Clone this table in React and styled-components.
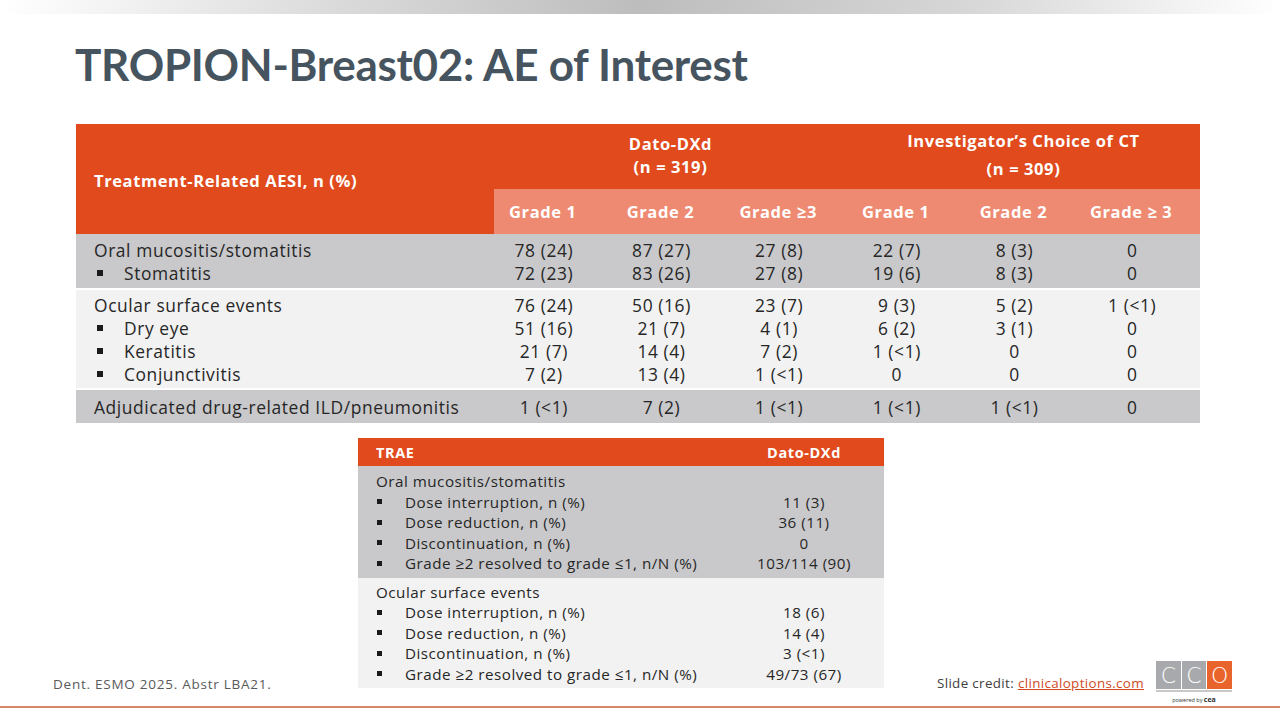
import React from 'react';
import styled, { createGlobalStyle } from 'styled-components';

const GlobalStyle = createGlobalStyle`
  html, body {
    margin: 0;
    padding: 0;
    background: #ffffff;
  }
  body {
    font-family: "Open Sans", Lato, sans-serif;
  }
`;

const Slide = styled.div`
  width: 1280px;
  height: 720px;
  display: flex;
  flex-direction: column;
  overflow: hidden;
  background: #fff;
`;

const TopBar = styled.div`
  height: 14px;
  background: linear-gradient(90deg, #ffffff 0%, #dcdcdc 25%, #bdbdbd 50%, #d6d6d6 75%, #ffffff 100%);
`;

const Title = styled.h1`
  margin: 24px 0 0 75px;
  height: 86px;
  font-family: Lato, "Open Sans", sans-serif;
  font-size: 44px;
  font-weight: 700;
  color: #465460;
  letter-spacing: -0.3px;
  line-height: 52px;
`;

const BigTable = styled.div`
  margin: 0 80px 0 76px;
  display: flex;
  flex-direction: column;
  font-size: 17.4px;
  letter-spacing: 0.6px;
  color: #262626;
`;

const HeadGrid = styled.div`
  display: grid;
  grid-template-columns: 418px repeat(6, 1fr);
  grid-template-rows: 65px 45px;
  background: #e04a1d;
  color: #fff;
  font-weight: 700;
  font-size: 16.5px;
  letter-spacing: 0.6px;
`;

const CornerCell = styled.div`
  grid-row: 1 / span 2;
  display: flex;
  align-items: center;
  padding-left: 18px;
  padding-top: 2px;
`;

const ArmCell = styled.div`
  grid-column: span 3;
  display: flex;
  flex-direction: column;
  align-items: center;
  justify-content: center;
  line-height: ${p => p.$lh}px;
  padding-bottom: 4px;
`;

const GradeCell = styled.div`
  background: #ee8a72;
  display: flex;
  align-items: center;
  justify-content: center;
  padding-right: 20px;
`;

const Group = styled.div`
  background: ${p => (p.$light ? '#f2f2f2' : '#c9c9cb')};
  padding: ${p => p.$pad};
  margin-top: ${p => (p.$first ? 0 : 2)}px;
`;

const Row = styled.div`
  display: grid;
  grid-template-columns: 418px repeat(6, 1fr);
  height: 23px;
  align-items: center;
`;

const Label = styled.div`
  padding-left: ${p => (p.$bullet ? 21 : 18)}px;
  display: flex;
  align-items: center;
  white-space: nowrap;
`;

const Bullet = styled.span`
  display: inline-block;
  width: 6px;
  height: 6px;
  background: #1a1a1a;
  margin-right: 21px;
`;

const Value = styled.div`
  text-align: center;
  padding-right: 18px;
  white-space: nowrap;
`;

const BottomRow = styled.div`
  margin-top: 15px;
  display: flex;
  align-items: flex-end;
`;

const Footnote = styled.div`
  width: 305px;
  padding-left: 53px;
  font-size: 13.5px;
  letter-spacing: 0.75px;
  color: #595959;
  margin-bottom: -5px;
`;

const SmallTable = styled.div`
  width: 526px;
  font-size: 15.2px;
  letter-spacing: 0.5px;
  color: #262626;
`;

const SmallHead = styled.div`
  display: grid;
  grid-template-columns: 366px 160px;
  height: 28px;
  align-items: center;
  background: #e04a1d;
  color: #fff;
  font-weight: 700;
  font-size: 14.5px;
  letter-spacing: 0.6px;
`;

const SmallGroup = styled.div`
  background: ${p => (p.$light ? '#f2f2f2' : '#c9c9cb')};
  padding: ${p => p.$pad};
`;

const SmallRow = styled.div`
  display: grid;
  grid-template-columns: 366px 160px;
  height: 20.5px;
  align-items: center;
`;

const SmallLabel = styled.div`
  padding-left: ${p => (p.$bullet ? 19 : 18)}px;
  display: flex;
  align-items: center;
  white-space: nowrap;
`;

const SmallBullet = styled(Bullet)`
  width: 5px;
  height: 5px;
  margin-right: 23px;
`;

const SmallValue = styled.div`
  text-align: center;
  white-space: nowrap;
`;

const Credit = styled.div`
  flex: 1;
  display: flex;
  align-items: flex-start;
  justify-content: flex-end;
  padding-right: 48px;
  margin-bottom: -16px;
`;

const CreditText = styled.div`
  font-size: 13.4px;
  letter-spacing: 0.35px;
  color: #404040;
  margin-top: 13px;
  margin-right: 12px;
  a {
    color: #d04a1f;
    text-decoration: underline;
  }
`;

const Logo = styled.div`
  display: flex;
  flex-direction: column;
  align-items: stretch;
  width: 76px;
`;

const LogoBoxes = styled.div`
  display: flex;
  gap: 1px;
  border-bottom: 2px solid #c8c8c8;
  padding-bottom: 1px;
`;

const LogoBox = styled.div`
  flex: 1;
  height: 28px;
  background: ${p => (p.$orange ? '#e8642c' : '#a7a9ac')};
  color: #fff;
  font-family: "DejaVu Sans", sans-serif;
  font-weight: 300;
  font-size: 22px;
  display: flex;
  align-items: center;
  justify-content: center;
`;

const Powered = styled.div`
  text-align: center;
  font-size: 5.5px;
  color: #333;
  margin-top: 3px;
  b {
    font-size: 7px;
  }
`;

const BottomLine = styled.div`
  margin-top: auto;
  margin-bottom: 12px;
  height: 2px;
  background: #d8866a;
`;

const groups = [
  {
    pad: '4px 0 4px',
    rows: [
      ['Oral mucositis/stomatitis', false, ['78 (24)', '87 (27)', '27 (8)', '22 (7)', '8 (3)', '0']],
      ['Stomatitis', true, ['72 (23)', '83 (26)', '27 (8)', '19 (6)', '8 (3)', '0']],
    ],
  },
  {
    light: true,
    pad: '3px 0 3px',
    rows: [
      ['Ocular surface events', false, ['76 (24)', '50 (16)', '23 (7)', '9 (3)', '5 (2)', '1 (<1)']],
      ['Dry eye', true, ['51 (16)', '21 (7)', '4 (1)', '6 (2)', '3 (1)', '0']],
      ['Keratitis', true, ['21 (7)', '14 (4)', '7 (2)', '1 (<1)', '0', '0']],
      ['Conjunctivitis', true, ['7 (2)', '13 (4)', '1 (<1)', '0', '0', '0']],
    ],
  },
  {
    pad: '5px 0 5px',
    rows: [
      ['Adjudicated drug-related ILD/pneumonitis', false, ['1 (<1)', '7 (2)', '1 (<1)', '1 (<1)', '1 (<1)', '0']],
    ],
  },
];

const trae = [
  {
    pad: '5px 0 4px',
    title: 'Oral mucositis/stomatitis',
    rows: [
      ['Dose interruption, n (%)', '11 (3)'],
      ['Dose reduction, n (%)', '36 (11)'],
      ['Discontinuation, n (%)', '0'],
      ['Grade ≥2 resolved to grade ≤1, n/N (%)', '103/114 (90)'],
    ],
  },
  {
    light: true,
    pad: '4px 0 4px',
    title: 'Ocular surface events',
    rows: [
      ['Dose interruption, n (%)', '18 (6)'],
      ['Dose reduction, n (%)', '14 (4)'],
      ['Discontinuation, n (%)', '3 (<1)'],
      ['Grade ≥2 resolved to grade ≤1, n/N (%)', '49/73 (67)'],
    ],
  },
];

const grades = ['Grade 1', 'Grade 2', 'Grade ≥3', 'Grade 1', 'Grade 2', 'Grade ≥ 3'];

export default function App() {
  return (
    <Slide>
      <GlobalStyle />
      <TopBar />
      <Title>TROPION-Breast02: AE of Interest</Title>

      <BigTable>
        <HeadGrid>
          <CornerCell>Treatment-Related AESI, n (%)</CornerCell>
          <ArmCell $lh={23}>
            <span>Dato-DXd</span>
            <span>(n = 319)</span>
          </ArmCell>
          <ArmCell $lh={28}>
            <span>Investigator’s Choice of CT</span>
            <span>(n = 309)</span>
          </ArmCell>
          {grades.map((g, i) => (
            <GradeCell key={i}>{g}</GradeCell>
          ))}
        </HeadGrid>
        {groups.map((grp, gi) => (
          <Group key={gi} $light={grp.light} $pad={grp.pad} $first={gi === 0}>
            {grp.rows.map(([label, bullet, vals], ri) => (
              <Row key={ri}>
                <Label $bullet={bullet}>
                  {bullet && <Bullet />}
                  {label}
                </Label>
                {vals.map((v, vi) => (
                  <Value key={vi}>{v}</Value>
                ))}
              </Row>
            ))}
          </Group>
        ))}
      </BigTable>

      <BottomRow>
        <Footnote>Dent. ESMO 2025. Abstr LBA21.</Footnote>
        <SmallTable>
          <SmallHead>
            <SmallLabel>TRAE</SmallLabel>
            <SmallValue>Dato-DXd</SmallValue>
          </SmallHead>
          {trae.map((grp, gi) => (
            <SmallGroup key={gi} $light={grp.light} $pad={grp.pad}>
              <SmallRow>
                <SmallLabel>{grp.title}</SmallLabel>
                <SmallValue />
              </SmallRow>
              {grp.rows.map(([label, val], ri) => (
                <SmallRow key={ri}>
                  <SmallLabel $bullet>
                    <SmallBullet />
                    {label}
                  </SmallLabel>
                  <SmallValue>{val}</SmallValue>
                </SmallRow>
              ))}
            </SmallGroup>
          ))}
        </SmallTable>
        <Credit>
          <CreditText>
            Slide credit: <a href="#">clinicaloptions.com</a>
          </CreditText>
          <Logo>
            <LogoBoxes>
              <LogoBox>C</LogoBox>
              <LogoBox>C</LogoBox>
              <LogoBox $orange>O</LogoBox>
            </LogoBoxes>
            <Powered>
              powered by <b>cea</b>
            </Powered>
          </Logo>
        </Credit>
      </BottomRow>

      <BottomLine />
    </Slide>
  );
}
